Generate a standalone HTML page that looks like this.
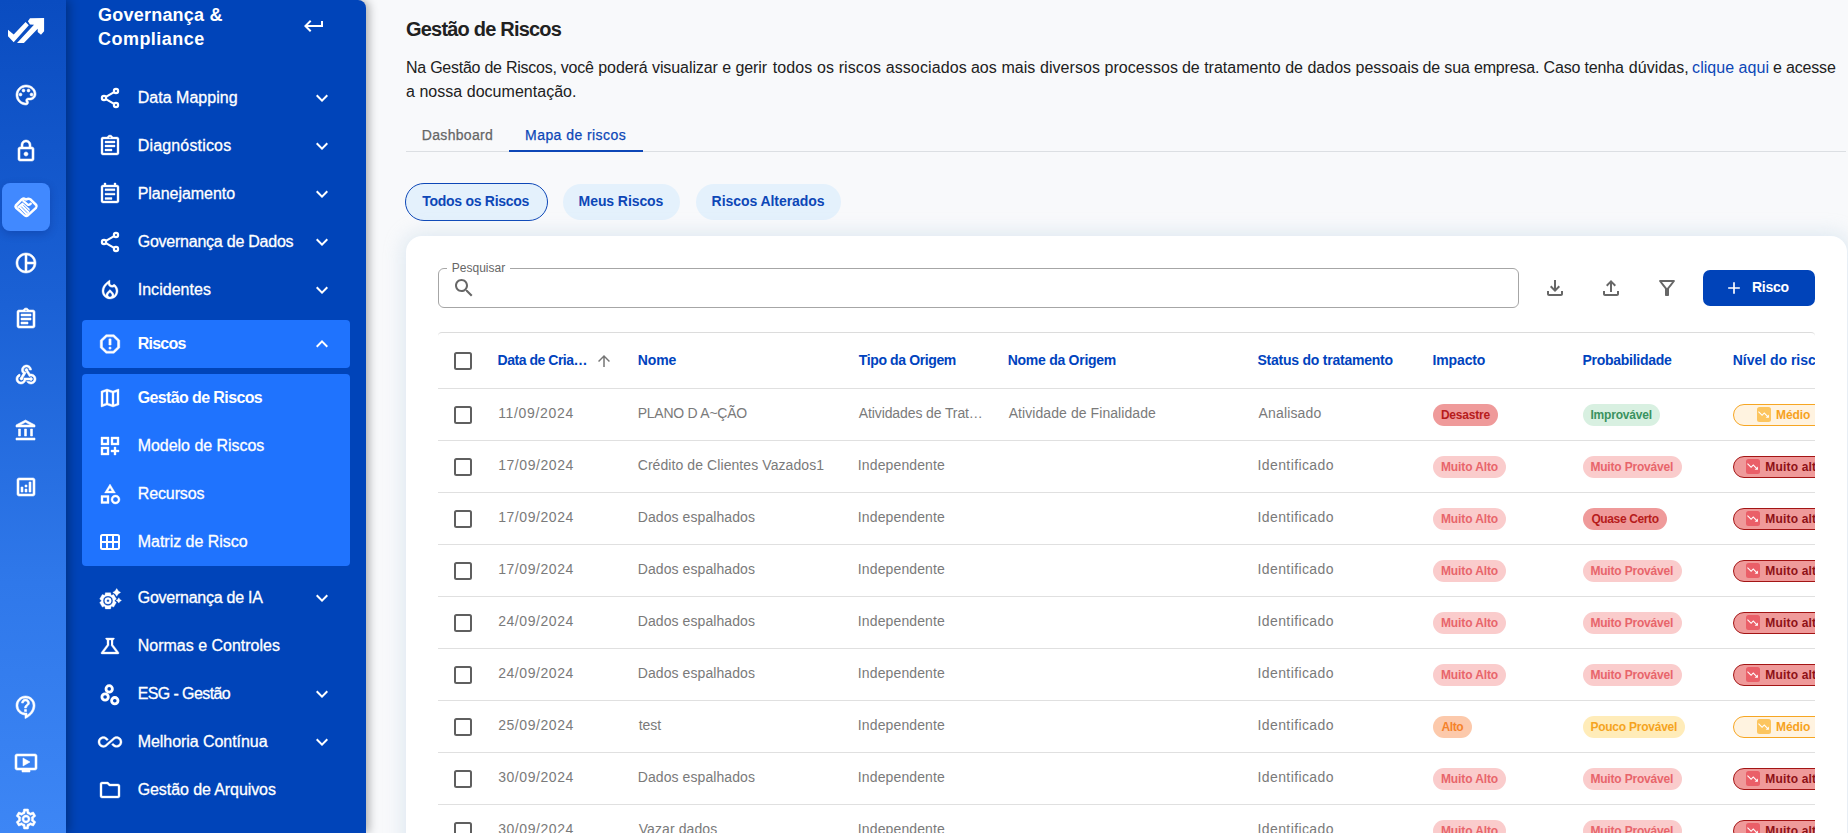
<!DOCTYPE html>
<html lang="pt-BR">
<head>
<meta charset="utf-8">
<title>Gestão de Riscos</title>
<style>
*{box-sizing:border-box;margin:0;padding:0}
html,body{width:1848px;height:833px;overflow:hidden}
body{font-family:"Liberation Sans",sans-serif;background:#f8f9fb;color:#212121;position:relative}
svg{display:block}
.abs{position:absolute}
.t{position:absolute;white-space:nowrap;display:block}
#rail{position:absolute;left:0;top:0;width:66px;height:833px;background:linear-gradient(180deg,#0a4cc0 0%,#1a60d4 35%,#2f78ea 70%,#3d86f5 100%);z-index:3;box-shadow:3px 0 10px rgba(0,0,0,.30)}
#rail .ic{position:absolute;left:14px;width:24px;height:24px;fill:#fff;stroke:#fff;stroke-width:.55px;overflow:visible}
#rail .active{position:absolute;left:2px;top:183px;width:48px;height:48px;border-radius:8px;background:#4189ff;box-shadow:0 3px 8px rgba(0,20,90,.22)}
#side{position:absolute;left:66px;top:0;width:300px;height:833px;background:#0044b9;z-index:2;box-shadow:3px 0 10px rgba(0,0,0,.30);border-top-right-radius:8px;color:#fff}
#side .h2{font-size:18px;line-height:24px;font-weight:700}
#side .it{position:absolute;left:16px;width:268px;height:48px;font-size:16px}
#side .it .t{top:15px;line-height:20px;-webkit-text-stroke:.3px #fff}
#side .it.b .t{font-weight:700;-webkit-text-stroke:0}
#side .it svg.i{position:absolute;left:16px;top:13px;width:24px;height:24px;fill:#fff;stroke:#fff;stroke-width:.35px;overflow:visible}
#side .it svg.c{position:absolute;left:228px;top:13px;width:24px;height:24px;fill:#fff}
#side .hl{position:absolute;left:16px;width:268px;background:#1f73fe;border-radius:4px}
#main{position:absolute;left:0;top:0;width:1848px;height:833px}
.h1{top:17px;font-size:20px;line-height:24px;font-weight:700;color:#212121}
.desc{font-size:16px;line-height:24px;color:#212121}
.desc a{color:#0d47b7;text-decoration:none}
.tab{top:126px;font-size:14px;line-height:18px;color:#666;-webkit-text-stroke:.25px #666}
.tab.on{color:#0d47b7;-webkit-text-stroke:.25px #0d47b7}
.chip{position:absolute;border-radius:19px;background:#e4f1fc}
.chip .t{font-size:14px;font-weight:700;line-height:18px;color:#0d47b7;top:8px}
#card{position:absolute;left:406px;top:236px;width:1441px;height:640px;background:#fff;border-radius:16px 16px 0 0;box-shadow:0 0 18px 4px rgba(184,208,228,.36)}
.gi{position:absolute;width:24px;height:24px;fill:#676767}
.th{font-size:14px;line-height:20px;font-weight:700;color:#0043be;top:350px}
.td{font-size:14px;line-height:20px;color:#7a7a7a}
.cb{position:absolute;left:454px;width:18px;height:18px;border:2px solid #5f5f5f;border-radius:2.500px}
.rl{position:absolute;left:438px;width:1377px;height:1px;background:#e0e0e0}
.bd{position:absolute;height:22px;border-radius:11px}
.bd .t{font-size:12px;line-height:14px;font-weight:700;top:4px}
.lv{position:absolute;left:1733px;height:22px;width:110px;border-radius:11px;border:1px solid}
.lv .sq{position:absolute;top:2.200px;width:14.500px;height:14.500px;border-radius:2.500px}
.lv .t{font-size:12px;line-height:14px;font-weight:700;top:3px}
</style>
</head>
<body>
<div id="rail">
  <svg class="abs" style="left:0;top:0" width="56" height="56" viewBox="0 0 56 56"><g fill="#fff"><path d="M8 29.800 L13.700 34.400 L25.600 22.100 L28.800 25.300 L13.700 42.300 L8 36.200 Z"/><path d="M30 18.300 L44.100 18.100 L44.100 31.300 L41 34.800 L37.700 31.900 L37.700 28.700 L23.900 42.900 L17 42.900 L34 24.800 L30 24.500 L27.900 21.200 Z"/></g></svg>
  <svg class="ic" style="top:83px" viewBox="0 0 24 24"><path d="M12 22C6.49 22 2 17.51 2 12S6.49 2 12 2s10 4.04 10 9c0 3.31-2.69 6-6 6h-1.77c-.28 0-.5.22-.5.5 0 .12.05.23.13.33.41.47.64 1.06.64 1.67 0 1.38-1.12 2.5-2.5 2.5zm0-18c-4.41 0-8 3.59-8 8s3.59 8 8 8c.28 0 .5-.22.5-.5 0-.16-.08-.28-.14-.35-.41-.46-.63-1.05-.63-1.65 0-1.38 1.12-2.5 2.5-2.5H16c2.21 0 4-1.79 4-4 0-3.86-3.59-7-8-7z"/><circle cx="6.5" cy="11.5" r="1.5"/><circle cx="9.5" cy="7.5" r="1.5"/><circle cx="14.5" cy="7.5" r="1.5"/><circle cx="17.5" cy="11.5" r="1.5"/></svg>
  <svg class="ic" style="top:139px" viewBox="0 0 24 24"><path d="M18 8h-1V6c0-2.76-2.24-5-5-5S7 3.240 7 6v2H6c-1.100 0-2 .9-2 2v10c0 1.100.9 2 2 2h12c1.100 0 2-.9 2-2V10c0-1.100-.9-2-2-2zM9 6c0-1.660 1.340-3 3-3s3 1.340 3 3v2H9V6zm9 14H6V10h12v10zm-6-3c1.100 0 2-.9 2-2s-.9-2-2-2-2 .9-2 2 .9 2 2 2z"/></svg>
  <div class="active"></div>
  <svg class="ic" style="top:195px;stroke:none" viewBox="0 0 24 24"><path d="M1.800 10.500 L8 4.200 Q9.600 3 11.200 4 L12.200 4.600 Q14.200 3 16.200 4.200 L22.200 10 Q23.200 11.500 22 12.800 L13.800 20.400 Q12.200 21.400 10.800 20.200 L2 12.800 Q1 11.600 1.800 10.500 Z" fill="none" stroke="#fff" stroke-width="2.500" stroke-linejoin="round"/><path d="M9.300 5.800 L13.600 9.500 Q15 10.400 16.300 9.200 L16.800 8.600" fill="none" stroke="#fff" stroke-width="2.300" stroke-linecap="round" stroke-linejoin="round"/><path d="M3 11.800 L8.500 7.500 L15.800 14 L15 17.500 L12.300 20.200 Z" fill="#fff"/><g stroke="#4189ff" stroke-width=".8" fill="none"><path d="M7.200 11.600 L13.200 17.800 M9.400 10.200 L15.200 16 M5.200 13.200 L11.200 19.500"/></g></svg>
  <svg class="ic" style="top:251px" viewBox="0 0 24 24"><path d="M12 2C6.480 2 2 6.480 2 12s4.480 10 10 10 10-4.480 10-10S17.520 2 12 2zm1 2.070c3.610.45 6.480 3.330 6.930 6.930H13V4.070zM4 12c0-4.060 3.070-7.440 7-7.930v15.870c-3.930-.5-7-3.880-7-7.940zm9 7.930V13h6.930c-.45 3.610-3.320 6.480-6.930 6.930z"/></svg>
  <svg class="ic" style="top:307px" viewBox="0 0 24 24"><path d="M7 15h7v2H7zm0-4h10v2H7zm0-4h10v2H7zm12-4h-4.180C14.400 1.840 13.300 1 12 1c-1.300 0-2.400.84-2.820 2H5c-.14 0-.27.01-.4.04-.39.08-.74.28-1.010.55-.18.18-.33.4-.43.64-.1.230-.16.490-.16.770v14c0 .27.06.54.16.78s.25.45.43.64c.27.27.62.47 1.010.55.130.02.260.03.400.03h14c1.100 0 2-.9 2-2V5c0-1.100-.9-2-2-2zm-7-.25c.41 0 .75.34.75.75s-.34.75-.75.75-.75-.34-.75-.75.34-.75.75-.75zM19 19H5V5h14v14z"/></svg>
  <svg class="ic" style="top:363px" viewBox="0 0 24 24"><path d="M10 15h5.880c.27-.31.67-.5 1.120-.5.830 0 1.500.67 1.500 1.500S17.830 17.500 17 17.500c-.44 0-.84-.19-1.120-.5H11.900c-.46 2.280-2.480 4-4.900 4-2.760 0-5-2.240-5-5 0-2.420 1.720-4.440 4-4.900v2.070C4.840 13.580 4 14.700 4 16c0 1.650 1.350 3 3 3s3-1.350 3-3V15zM12.500 4c1.650 0 3 1.350 3 3h2c0-2.760-2.240-5-5-5s-5 2.240-5 5c0 1.430.6 2.710 1.550 3.620l-2.350 3.900C6.300 14.540 6 14.980 6 15.500 6 16.330 6.670 17 7.500 17S9 16.330 9 15.500c0-.16-.02-.31-.07-.45l3.380-5.630C10.990 9.330 9.500 8.350 9.500 7c0-1.650 1.350-3 3-3zM17 13c-.64 0-1.230.2-1.720.54l-3.050-5.070C11.530 8.350 11 7.740 11 7c0-.83.67-1.500 1.500-1.500S14 6.170 14 7c0 .15-.02.29-.06.43l2.190 3.650C16.410 11.030 16.700 11 17 11c2.760 0 5 2.240 5 5s-2.240 5-5 5c-1.850 0-3.470-1.010-4.330-2.500h2.670c.48.32 1.050.5 1.660.5 1.650 0 3-1.350 3-3s-1.350-3-3-3z"/></svg>
  <svg class="ic" style="top:419px" viewBox="0 0 24 24"><path d="M6.500 10h-2v7h2v-7zm6 0h-2v7h2v-7zm8.500 9H2v2h19v-2zm-2.500-9h-2v7h2v-7zm-7-6.740L16.710 6H6.290l5.210-2.740m0-2.260L2 6v2h19V6l-9.500-5z"/></svg>
  <svg class="ic" style="top:475px" viewBox="0 0 24 24"><path d="M19 3H5c-1.100 0-2 .9-2 2v14c0 1.100.9 2 2 2h14c1.100 0 2-.9 2-2V5c0-1.100-.9-2-2-2zm0 16H5V5h14v14zM7 12h2v5H7zm8-5h2v10h-2zm-4 7h2v3h-2zm0-4h2v2h-2z"/></svg>
  <svg class="ic" style="top:695px" viewBox="0 0 24 24"><path d="M11 23.590v-3.600c-5.010-.26-9-4.420-9-9.490C2 5.260 6.260 1 11.500 1S21 5.260 21 10.500c0 4.950-3.440 9.930-8.570 12.400l-1.430.69zM11.500 3C7.360 3 4 6.360 4 10.500S7.360 18 11.500 18H13v2.300c3.640-2.300 6-6.080 6-9.800C19 6.360 15.640 3 11.500 3zm-1 11.500h2v2h-2zm2-1.500h-2c0-3.250 3-3 3-5 0-1.100-.9-2-2-2s-2 .9-2 2h-2c0-2.210 1.790-4 4-4s4 1.790 4 4c0 2.500-3 2.750-3 5z"/></svg>
  <svg class="ic" style="top:751px" viewBox="0 0 24 24"><path d="M21 3H3c-1.110 0-2 .89-2 2v12c0 1.100.89 2 2 2h5v2h8v-2h5c1.100 0 1.990-.9 1.990-2L23 5c0-1.110-.9-2-2-2zm0 14H3V5h18v12zm-5-6l-7 4V7z"/></svg>
  <svg class="ic" style="top:807px" viewBox="0 0 24 24"><path d="M19.430 12.980c.04-.32.07-.64.07-.98 0-.34-.03-.66-.07-.98l2.110-1.650c.19-.15.24-.42.12-.64l-2-3.460c-.09-.16-.26-.25-.44-.25-.06 0-.12.010-.17.030l-2.490 1c-.52-.4-1.080-.73-1.690-.98l-.38-2.650C14.460 2.180 14.250 2 14 2h-4c-.25 0-.46.18-.49.42l-.38 2.650c-.61.25-1.170.59-1.690.98l-2.490-1c-.06-.02-.12-.03-.18-.03-.17 0-.34.09-.43.25l-2 3.460c-.13.22-.07.49.12.64l2.110 1.650c-.04.32-.07.65-.07.980 0 .33.03.66.07.98l-2.110 1.650c-.19.15-.24.42-.12.640l2 3.460c.09.160.26.250.44.250.06 0 .12-.010.17-.030l2.490-1c.52.4 1.080.73 1.690.98l.38 2.650c.03.24.24.42.49.42h4c.25 0 .46-.18.49-.42l.38-2.650c.61-.25 1.170-.59 1.690-.98l2.490 1c.06.02.12.03.18.03.17 0 .34-.09.43-.25l2-3.460c.12-.22.07-.49-.12-.64l-2.110-1.650zm-1.980-1.710c.04.31.05.52.05.73 0 .21-.02.43-.05.73l-.14 1.130.89.7 1.080.84-.7 1.210-1.270-.51-1.040-.42-.9.68c-.43.32-.84.56-1.250.73l-1.060.43-.16 1.130-.2 1.350h-1.400l-.19-1.350-.16-1.130-1.060-.43c-.43-.18-.83-.41-1.230-.71l-.91-.7-1.060.43-1.270.51-.7-1.210 1.080-.84.89-.7-.14-1.130c-.03-.31-.05-.54-.05-.74s.02-.43.05-.73l.14-1.130-.89-.7-1.080-.84.7-1.210 1.270.51 1.040.42.9-.68c.43-.32.84-.56 1.250-.73l1.060-.43.16-1.130.2-1.350h1.390l.19 1.350.16 1.130 1.060.43c.43.18.83.41 1.230.71l.91.7 1.060-.43 1.270-.51.7 1.210-1.070.85-.89.7.14 1.130zM12 8c-2.210 0-4 1.790-4 4s1.790 4 4 4 4-1.790 4-4-1.790-4-4-4zm0 6c-1.100 0-2-.9-2-2s.9-2 2-2 2 .9 2 2-.9 2-2 2z"/></svg>
</div>

<div id="side">
<span class="t h2" style="left:32.00px;letter-spacing:0.227px;top:3px">Governança &amp;</span>
<span class="t h2" style="left:32.00px;letter-spacing:0.467px;top:27px">Compliance</span>
<svg class="abs" style="left:236px;top:13.700px;fill:#fff" width="24" height="24" viewBox="0 0 24 24"><path d="M19 7v4H5.830l3.580-3.590L8 6l-6 6 6 6 1.410-1.410L5.830 13H21V7z"/></svg>
<div class="hl" style="top:320px;height:48px"></div>
<div class="hl" style="top:374px;height:192px"></div>
<div class="it" style="top:73px"><svg class="i" viewBox="0 0 24 24"><g fill="none" stroke="#fff" stroke-width="2.200"><circle cx="18" cy="5" r="2.100"/><circle cx="6" cy="12" r="2.100"/><circle cx="18" cy="19" r="2.100"/><path d="M7.900 10.900 L16.100 6.100 M7.900 13.100 L16.100 17.900"/></g></svg><span class="t " style="left:55.70px;letter-spacing:0.027px;">Data Mapping</span><svg class="c" viewBox="0 0 24 24"><path d="M16.590 8.590L12 13.170 7.410 8.590 6 10l6 6 6-6z"/></svg></div>
<div class="it" style="top:121px"><svg class="i" viewBox="0 0 24 24"><path d="M7 15h7v2H7zm0-4h10v2H7zm0-4h10v2H7zm12-4h-4.180C14.400 1.840 13.300 1 12 1c-1.300 0-2.400.84-2.820 2H5c-.14 0-.27.01-.4.04-.39.08-.74.28-1.010.55-.18.18-.33.4-.43.64-.1.230-.16.490-.16.770v14c0 .27.06.54.16.78s.25.45.43.64c.27.27.62.47 1.010.55.130.02.260.03.400.03h14c1.100 0 2-.9 2-2V5c0-1.100-.9-2-2-2zm-7-.25c.41 0 .75.34.75.75s-.34.75-.75.75-.75-.34-.75-.75.34-.75.75-.75zM19 19H5V5h14v14z"/></svg><span class="t " style="left:55.70px;letter-spacing:0.173px;">Diagnósticos</span><svg class="c" viewBox="0 0 24 24"><path d="M16.590 8.590L12 13.170 7.410 8.590 6 10l6 6 6-6z"/></svg></div>
<div class="it" style="top:169px"><svg class="i" viewBox="0 0 24 24"><path transform="translate(0,-1)" d="M19 4h-1V2h-2v2H8V2H6v2H5c-1.110 0-2 .9-2 2v14c0 1.100.89 2 2 2h14c1.100 0 2-.9 2-2V6c0-1.100-.9-2-2-2zm0 16H5V6h14v14zM7 7.800h10v1.900H7zm0 4.400h10v1.900H7zm0 4.400h7v1.800H7z"/></svg><span class="t " style="left:55.70px;letter-spacing:-0.036px;">Planejamento</span><svg class="c" viewBox="0 0 24 24"><path d="M16.590 8.590L12 13.170 7.410 8.590 6 10l6 6 6-6z"/></svg></div>
<div class="it" style="top:217px"><svg class="i" viewBox="0 0 24 24"><g fill="none" stroke="#fff" stroke-width="2.200"><circle cx="18" cy="5" r="2.100"/><circle cx="6" cy="12" r="2.100"/><circle cx="18" cy="19" r="2.100"/><path d="M7.900 10.900 L16.100 6.100 M7.900 13.100 L16.100 17.900"/></g></svg><span class="t " style="left:55.70px;letter-spacing:-0.233px;">Governança de Dados</span><svg class="c" viewBox="0 0 24 24"><path d="M16.590 8.590L12 13.170 7.410 8.590 6 10l6 6 6-6z"/></svg></div>
<div class="it" style="top:265px"><svg class="i" viewBox="0 0 24 24"><path d="M16 6l-.44.55C14.380 8.020 12 7.190 12 5.300V2S4 6 4 13c0 2.920 1.560 5.470 3.890 6.860.56.33 1.170.6 1.810.8.720.22 1.490.34 2.300.34 4.420 0 8-3.580 8-8 0-2.960-1.610-5.620-4-7zM12 19c-1.100 0-2-.87-2-1.940 0-.51.2-.99.58-1.360L12 14.300l1.430 1.400c.37.37.57.85.57 1.360 0 1.070-.9 1.940-2 1.940zm3.960-1.220c.04-.36.22-1.890-1.130-3.220L12 11.500l-2.830 2.780C7.810 15.620 8 17.160 8.040 17.500 6.790 16.400 6 14.790 6 13c0-3.160 2.130-5.650 4.030-7.250.23 1.990 1.930 3.550 3.990 3.550.78 0 1.540-.23 2.180-.64C17.330 9.800 18 11.360 18 13c0 1.790-.79 3.400-2.040 4.780z"/></svg><span class="t " style="left:55.70px;letter-spacing:0.033px;">Incidentes</span><svg class="c" viewBox="0 0 24 24"><path d="M16.590 8.590L12 13.170 7.410 8.590 6 10l6 6 6-6z"/></svg></div>
<div class="it b" style="top:319px"><svg class="i" viewBox="0 0 24 24"><g transform="translate(12 12) scale(1.080 1.020) translate(-12 -12)" stroke="#fff" stroke-width=".500"><path d="M15.730 3H8.270L3 8.270v7.460L8.270 21h7.460L21 15.730V8.270L15.730 3zM19 14.900L14.900 19H9.100L5 14.900V9.100L9.100 5h5.800L19 9.100v5.800z"/><path d="M11 7h2v6h-2z"/><circle cx="12" cy="16" r="1.100"/></g></svg><span class="t " style="left:55.70px;letter-spacing:-0.760px;">Riscos</span><svg class="c" viewBox="0 0 24 24"><path d="M12 8l-6 6 1.410 1.410L12 10.830l4.590 4.580L18 14z"/></svg></div>
<div class="it b" style="top:373px"><svg class="i" viewBox="0 0 24 24"><path d="M20.500 3l-.16.03L15 5.100 9 3 3.360 4.900c-.21.07-.36.25-.36.480V20.500c0 .28.22.5.5.5l.16-.03L9 18.900l6 2.100 5.640-1.900c.21-.07.36-.25.36-.480V3.500c0-.28-.22-.5-.5-.5zM10 5.470l4 1.400v11.660l-4-1.400V5.470zm-5 .99l3-1.010v11.700l-3 1.160V6.460zm14 11.080l-3 1.010V6.860l3-1.160v11.840z"/></svg><span class="t " style="left:55.70px;letter-spacing:-0.613px;">Gestão de Riscos</span></div>
<div class="it" style="top:421px"><svg class="i" viewBox="0 0 24 24"><path d="M3 11h8V3H3v8zm2-6h4v4H5V5zm8-2v8h8V3h-8zm6 6h-4V5h4v4zM3 21h8v-8H3v8zm2-6h4v4H5v-4zm13-2h-2v3h-3v2h3v3h2v-3h3v-2h-3z"/></svg><span class="t " style="left:55.70px;letter-spacing:-0.033px;">Modelo de Riscos</span></div>
<div class="it" style="top:469px"><svg class="i" viewBox="0 0 24 24"><path d="M12 2l-5.500 9h11L12 2zm0 3.840L13.930 9h-3.870L12 5.840zM17.500 13c-2.490 0-4.500 2.010-4.500 4.500s2.010 4.500 4.500 4.500 4.500-2.010 4.500-4.500-2.010-4.500-4.500-4.500zm0 7c-1.380 0-2.500-1.120-2.500-2.500s1.120-2.500 2.500-2.500 2.500 1.120 2.500 2.500-1.120 2.500-2.500 2.500zM3 21.500h8v-8H3v8zm2-6h4v4H5v-4z"/></svg><span class="t " style="left:55.70px;letter-spacing:-0.100px;">Recursos</span></div>
<div class="it" style="top:517px"><svg class="i" viewBox="0 0 24 24"><g fill="none" stroke="#fff" stroke-width="2"><rect x="3" y="5" width="18" height="14" rx="1.500"/><path d="M9 5 V19 M15 5 V19 M3 12 H21"/></g></svg><span class="t " style="left:55.70px;letter-spacing:-0.014px;">Matriz de Risco</span></div>
<div class="it" style="top:573px"><svg class="i" viewBox="0 0 24 24"><path fill-rule="evenodd" d="M6.94 8.95 L7.37 6.72 L12.63 6.72 L13.06 8.95 L13.54 9.23 L15.69 8.48 L18.31 13.03 L16.59 14.52 L16.59 15.08 L18.31 16.57 L15.69 21.12 L13.54 20.37 L13.06 20.65 L12.63 22.88 L7.37 22.88 L6.94 20.65 L6.46 20.37 L4.31 21.12 L1.69 16.57 L3.41 15.08 L3.41 14.52 L1.69 13.03 L4.31 8.48 L6.46 9.23 Z M5.10 14.80 a4.90 4.90 0 1 1 9.80 0 a4.90 4.90 0 1 1 -9.80 0 Z M6.70 14.80 a3.30 3.30 0 1 1 6.60 0 a3.30 3.30 0 1 1 -6.60 0 Z M8.70 14.80 a1.30 1.30 0 1 1 2.60 0 a1.30 1.30 0 1 1 -2.60 0 Z"/><path d="M18.70 2.50 Q19.79 5.31 22.60 6.40 Q19.79 7.49 18.70 10.30 Q17.61 7.49 14.80 6.40 Q17.61 5.31 18.70 2.50 Z"/><path d="M20.80 11.70 Q21.56 13.64 23.50 14.40 Q21.56 15.16 20.80 17.10 Q20.04 15.16 18.10 14.40 Q20.04 13.64 20.80 11.70 Z"/></svg><span class="t " style="left:55.70px;letter-spacing:-0.247px;">Governança de IA</span><svg class="c" viewBox="0 0 24 24"><path d="M16.590 8.590L12 13.170 7.410 8.590 6 10l6 6 6-6z"/></svg></div>
<div class="it" style="top:621px"><svg class="i" viewBox="0 0 24 24"><path d="M13 11.330L18 18H6l5-6.670V6h2m2.960-2H8.040c-.42 0-.65.48-.39.81L9 6.500v4.170L3.200 18.400c-.49.66-.02 1.600.8 1.600h16c.82 0 1.290-.94.8-1.600L15 10.670V6.500l1.350-1.690c.26-.33.03-.81-.39-.81z"/></svg><span class="t " style="left:55.70px;letter-spacing:-0.000px;">Normas e Controles</span></div>
<div class="it" style="top:669px"><svg class="i" viewBox="0 0 24 24"><g fill="none" stroke="#fff" stroke-width="2.800"><circle cx="11.200" cy="6.900" r="3.200"/><circle cx="7.100" cy="15" r="3.200"/><circle cx="16.800" cy="18.700" r="3.200"/></g></svg><span class="t " style="left:55.70px;letter-spacing:-0.600px;">ESG - Gestão</span><svg class="c" viewBox="0 0 24 24"><path d="M16.590 8.590L12 13.170 7.410 8.590 6 10l6 6 6-6z"/></svg></div>
<div class="it" style="top:717px"><svg class="i" viewBox="0 0 24 24"><path d="M18.600 6.620c-1.440 0-2.800.56-3.770 1.530L12 10.660 10.480 12h.01L7.800 14.390c-.64.64-1.490.99-2.400.99-1.870 0-3.390-1.510-3.390-3.380S3.530 8.620 5.400 8.620c.91 0 1.760.35 2.440 1.030l1.130 1 1.510-1.340L9.220 8.200C8.200 7.180 6.840 6.620 5.400 6.620 2.420 6.620 0 9.040 0 12s2.420 5.380 5.400 5.380c1.440 0 2.800-.56 3.770-1.530l2.830-2.500.01.010L13.520 12h-.01l2.690-2.390c.64-.64 1.490-.99 2.400-.99 1.870 0 3.390 1.510 3.390 3.380s-1.520 3.380-3.390 3.380c-.9 0-1.760-.35-2.440-1.030l-1.140-1.010-1.510 1.340 1.270 1.120c1.020 1.010 2.370 1.570 3.820 1.570 2.980 0 5.400-2.410 5.400-5.380s-2.420-5.370-5.400-5.370z"/></svg><span class="t " style="left:55.70px;letter-spacing:-0.056px;">Melhoria Contínua</span><svg class="c" viewBox="0 0 24 24"><path d="M16.590 8.590L12 13.170 7.410 8.590 6 10l6 6 6-6z"/></svg></div>
<div class="it" style="top:765px"><svg class="i" viewBox="0 0 24 24"><path d="M9.170 6l2 2H20v10H4V6h5.170M10 4H4c-1.100 0-1.990.9-1.990 2L2 18c0 1.100.9 2 2 2h16c1.100 0 2-.9 2-2V8c0-1.100-.9-2-2-2h-8l-2-2z"/></svg><span class="t " style="left:55.70px;letter-spacing:-0.082px;">Gestão de Arquivos</span></div>
</div>
<div id="main">
<span class="t h1" style="left:406.00px;letter-spacing:-0.800px;">Gestão de Riscos</span>
<span class="t desc" style="left:406.00px;letter-spacing:-0.250px;top:56px">Na Gestão de Riscos, você</span>
<span class="t desc" style="left:598.30px;letter-spacing:-0.083px;top:56px">poderá visualizar e gerir</span>
<span class="t desc" style="left:772.70px;letter-spacing:0.112px;top:56px">todos os riscos associados</span>
<span class="t desc" style="left:970.90px;letter-spacing:0.062px;top:56px">aos mais diversos processos</span>
<span class="t desc" style="left:1181.90px;letter-spacing:0.007px;top:56px">de tratamento de dados pessoais</span>
<span class="t desc" style="left:1422.60px;letter-spacing:-0.168px;top:56px">de sua empresa. Caso tenha</span>
<span class="t desc" style="left:1628.80px;letter-spacing:0.057px;top:56px">dúvidas,</span>
<span class="t desc" style="left:1692.10px;letter-spacing:0.040px;top:56px"><a>clique aqui</a></span>
<span class="t desc" style="left:1773.00px;letter-spacing:-0.171px;top:56px">e acesse</span>
<span class="t desc" style="left:406.00px;letter-spacing:0.030px;top:80px">a nossa documentação.</span>
<span class="t tab" style="left:421.80px;letter-spacing:0.313px;">Dashboard</span>
<span class="t tab on" style="left:525.10px;letter-spacing:0.431px;">Mapa de riscos</span>
<div class="abs" style="left:406px;top:151px;width:1440px;height:1px;background:#dcdfe3"></div>
<div class="abs" style="left:509px;top:150px;width:134px;height:2px;background:#0d47b7"></div>
<div class="chip" style="left:405px;top:183px;width:143px;height:38px;border:1.500px solid #0d47b7"><span class="t " style="left:16.30px;letter-spacing:-0.279px;top:7.500px">Todos os Riscos</span></div>
<div class="chip" style="left:563px;top:184px;width:117px;height:36px"><span class="t " style="left:15.60px;letter-spacing:-0.080px;">Meus Riscos</span></div>
<div class="chip" style="left:696px;top:184px;width:145px;height:36px"><span class="t " style="left:15.60px;letter-spacing:-0.060px;">Riscos Alterados</span></div>
<div id="card"></div>
<div class="abs" style="left:438px;top:268px;width:1081px;height:40px;border:1px solid #a6a6a6;border-radius:6px"></div>
<div class="abs" style="left:447px;top:266px;width:63px;height:5px;background:#fff"></div>
<span class="t " style="left:451.70px;letter-spacing:0.025px;top:260px;font-size:12px;line-height:16px;color:#666">Pesquisar</span>
<svg class="gi" style="left:452px;top:276px" viewBox="0 0 24 24"><path d="M15.500 14h-.79l-.28-.27C15.410 12.590 16 11.110 16 9.500 16 5.910 13.090 3 9.500 3S3 5.910 3 9.500 5.910 16 9.500 16c1.610 0 3.090-.59 4.230-1.570l.27.28v.79l5 4.990L20.490 19l-4.990-5zm-6 0C7.010 14 5 11.990 5 9.500S7.010 5 9.500 5 14 7.010 14 9.500 11.990 14 9.500 14z"/></svg>
<svg class="gi" style="left:1543px;top:276px" viewBox="0 0 24 24"><path d="M18 15v3H6v-3H4v3c0 1.100.9 2 2 2h12c1.100 0 2-.9 2-2v-3h-2zm-1-4l-1.410-1.410L13 12.170V4h-2v8.170L8.410 9.590 7 11l5 5 5-5z"/></svg>
<svg class="gi" style="left:1599px;top:276px" viewBox="0 0 24 24"><path d="M18 15v3H6v-3H4v3c0 1.100.9 2 2 2h12c1.100 0 2-.9 2-2v-3h-2zM7 9l1.410 1.410L11 7.830V16h2V7.830l2.590 2.580L17 9l-5-5-5 5z"/></svg>
<svg class="gi" style="left:1655px;top:276px" viewBox="0 0 24 24"><path d="M7 6h10l-5.010 6.300L7 6zm-2.750-.39C6.270 8.200 10 13 10 13v6c0 .55.45 1 1 1h2c.55 0 1-.45 1-1v-6s3.720-4.800 5.740-7.390c.51-.66.04-1.610-.79-1.610H5.040c-.83 0-1.300.95-.79 1.610z"/></svg>
<div class="abs" style="left:1703px;top:270px;width:112px;height:36px;border-radius:7px;background:#0043b9"></div>
<svg class="abs" style="left:1724px;top:278px;fill:#fff" width="20" height="20" viewBox="0 0 24 24"><path d="M19 13h-6v6h-2v-6H5v-2h6V5h2v6h6v2z"/></svg>
<span class="t " style="left:1752.00px;letter-spacing:-0.250px;top:276.500px;font-size:14px;line-height:20px;font-weight:700;color:#fff">Risco</span>
<div class="abs" style="left:438px;top:332px;width:1377px;height:520px;border-top:1px solid #dcdcdc;border-radius:4px 4px 0 0"></div>
<div class="cb" style="top:352px"></div>
<span class="t th" style="left:497.60px;letter-spacing:-0.475px;">Data de Cria…</span>
<span class="t th" style="left:637.70px;letter-spacing:-0.100px;">Nome</span>
<span class="t th" style="left:858.80px;letter-spacing:-0.377px;">Tipo da Origem</span>
<span class="t th" style="left:1007.70px;letter-spacing:-0.262px;">Nome da Origem</span>
<span class="t th" style="left:1257.50px;letter-spacing:-0.232px;">Status do tratamento</span>
<span class="t th" style="left:1432.50px;letter-spacing:-0.133px;">Impacto</span>
<span class="t th" style="left:1582.40px;letter-spacing:-0.267px;">Probabilidade</span>
<div class="abs" style="left:1733px;top:350px;width:82px;height:20px;overflow:hidden"><span class="t th" style="left:-0.30px;letter-spacing:-0.015px;top:0">Nível do risco</span></div>
<svg class="abs" style="left:595px;top:352px;fill:#757575" width="18" height="18" viewBox="0 0 24 24"><path d="M4 12l1.410 1.410L11 7.830V20h2V7.830l5.580 5.590L20 12l-8-8-8 8z"/></svg>
<div class="rl" style="top:388px"></div>
<div class="cb" style="top:406px"></div>
<span class="t td" style="left:498.20px;letter-spacing:0.667px;top:403px">11/09/2024</span>
<span class="t td" style="left:637.70px;letter-spacing:-0.242px;top:403px">PLANO D A~ÇÃO</span>
<span class="t td" style="left:858.80px;letter-spacing:-0.111px;top:403px">Atividades de Trat…</span>
<span class="t td" style="left:1008.70px;letter-spacing:0.073px;top:403px">Atividade de Finalidade</span>
<span class="t td" style="left:1258.50px;letter-spacing:0.162px;top:403px">Analisado</span>
<div class="bd" style="left:1433px;top:404px;width:65.0px;background:#ef9a9a"><span class="t " style="left:7.90px;letter-spacing:-0.200px;color:#b71c1c">Desastre</span></div>
<div class="bd" style="left:1583px;top:404px;width:77.0px;background:#d8f0e1"><span class="t " style="left:7.40px;letter-spacing:-0.189px;color:#3a9260">Improvável</span></div>
<div class="abs" style="left:1733px;top:404px;width:82px;height:22px;overflow:hidden"><div class="lv" style="left:0;border-color:#f6a623;background:#fff3e0"><div class="sq" style="left:22.700px;background:#fcc55f"><svg class="abs" style="left:.800px;top:.800px" width="13" height="13" viewBox="0 0 24 24"><path d="M16 18l2.290-2.290-4.880-4.880-4 4L2 7.410 3.410 6l6 6 4-4 6.300 6.290L22 12v6z" fill="#fff"/></svg></div><span class="t " style="left:42.00px;letter-spacing:-0.075px;color:#f6a21e">Médio</span></div></div>
<div class="rl" style="top:440px"></div>
<div class="cb" style="top:458px"></div>
<span class="t td" style="left:498.20px;letter-spacing:0.556px;top:455px">17/09/2024</span>
<span class="t td" style="left:637.70px;letter-spacing:0.081px;top:455px">Crédito de Clientes Vazados1</span>
<span class="t td" style="left:857.80px;letter-spacing:0.127px;top:455px">Independente</span>
<span class="t td" style="left:1257.50px;letter-spacing:0.400px;top:455px">Identificado</span>
<div class="bd" style="left:1433px;top:456px;width:72.9px;background:#facccc"><span class="t " style="left:7.90px;letter-spacing:-0.100px;color:#e8656b">Muito Alto</span></div>
<div class="bd" style="left:1583px;top:456px;width:98.8px;background:#facccc"><span class="t " style="left:7.40px;letter-spacing:-0.177px;color:#e8656b">Muito Provável</span></div>
<div class="abs" style="left:1733px;top:456px;width:82px;height:22px;overflow:hidden"><div class="lv" style="left:0;border-color:#a31515;background:#ef9a9a"><div class="sq" style="left:11.700px;background:#ea5f68"><svg class="abs" style="left:.800px;top:.800px" width="13" height="13" viewBox="0 0 24 24"><path d="M16 18l2.290-2.290-4.880-4.880-4 4L2 7.410 3.410 6l6 6 4-4 6.300 6.290L22 12v6z" fill="#fff"/></svg></div><span class="t " style="left:31.20px;letter-spacing:0.200px;color:#8e1116">Muito alto</span></div></div>
<div class="rl" style="top:492px"></div>
<div class="cb" style="top:510px"></div>
<span class="t td" style="left:498.20px;letter-spacing:0.556px;top:507px">17/09/2024</span>
<span class="t td" style="left:637.70px;letter-spacing:0.087px;top:507px">Dados espalhados</span>
<span class="t td" style="left:857.80px;letter-spacing:0.127px;top:507px">Independente</span>
<span class="t td" style="left:1257.50px;letter-spacing:0.400px;top:507px">Identificado</span>
<div class="bd" style="left:1433px;top:508px;width:72.9px;background:#facccc"><span class="t " style="left:7.90px;letter-spacing:-0.100px;color:#e8656b">Muito Alto</span></div>
<div class="bd" style="left:1583px;top:508px;width:83.8px;background:#ef9a9a"><span class="t " style="left:8.40px;letter-spacing:-0.370px;color:#b71c1c">Quase Certo</span></div>
<div class="abs" style="left:1733px;top:508px;width:82px;height:22px;overflow:hidden"><div class="lv" style="left:0;border-color:#a31515;background:#ef9a9a"><div class="sq" style="left:11.700px;background:#ea5f68"><svg class="abs" style="left:.800px;top:.800px" width="13" height="13" viewBox="0 0 24 24"><path d="M16 18l2.290-2.290-4.880-4.880-4 4L2 7.410 3.410 6l6 6 4-4 6.300 6.290L22 12v6z" fill="#fff"/></svg></div><span class="t " style="left:31.20px;letter-spacing:0.200px;color:#8e1116">Muito alto</span></div></div>
<div class="rl" style="top:544px"></div>
<div class="cb" style="top:562px"></div>
<span class="t td" style="left:498.20px;letter-spacing:0.556px;top:559px">17/09/2024</span>
<span class="t td" style="left:637.70px;letter-spacing:0.087px;top:559px">Dados espalhados</span>
<span class="t td" style="left:857.80px;letter-spacing:0.127px;top:559px">Independente</span>
<span class="t td" style="left:1257.50px;letter-spacing:0.400px;top:559px">Identificado</span>
<div class="bd" style="left:1433px;top:560px;width:72.9px;background:#facccc"><span class="t " style="left:7.90px;letter-spacing:-0.100px;color:#e8656b">Muito Alto</span></div>
<div class="bd" style="left:1583px;top:560px;width:98.8px;background:#facccc"><span class="t " style="left:7.40px;letter-spacing:-0.177px;color:#e8656b">Muito Provável</span></div>
<div class="abs" style="left:1733px;top:560px;width:82px;height:22px;overflow:hidden"><div class="lv" style="left:0;border-color:#a31515;background:#ef9a9a"><div class="sq" style="left:11.700px;background:#ea5f68"><svg class="abs" style="left:.800px;top:.800px" width="13" height="13" viewBox="0 0 24 24"><path d="M16 18l2.290-2.290-4.880-4.880-4 4L2 7.410 3.410 6l6 6 4-4 6.300 6.290L22 12v6z" fill="#fff"/></svg></div><span class="t " style="left:31.20px;letter-spacing:0.200px;color:#8e1116">Muito alto</span></div></div>
<div class="rl" style="top:596px"></div>
<div class="cb" style="top:614px"></div>
<span class="t td" style="left:498.20px;letter-spacing:0.556px;top:611px">24/09/2024</span>
<span class="t td" style="left:637.70px;letter-spacing:0.087px;top:611px">Dados espalhados</span>
<span class="t td" style="left:857.80px;letter-spacing:0.127px;top:611px">Independente</span>
<span class="t td" style="left:1257.50px;letter-spacing:0.400px;top:611px">Identificado</span>
<div class="bd" style="left:1433px;top:612px;width:72.9px;background:#facccc"><span class="t " style="left:7.90px;letter-spacing:-0.100px;color:#e8656b">Muito Alto</span></div>
<div class="bd" style="left:1583px;top:612px;width:98.8px;background:#facccc"><span class="t " style="left:7.40px;letter-spacing:-0.177px;color:#e8656b">Muito Provável</span></div>
<div class="abs" style="left:1733px;top:612px;width:82px;height:22px;overflow:hidden"><div class="lv" style="left:0;border-color:#a31515;background:#ef9a9a"><div class="sq" style="left:11.700px;background:#ea5f68"><svg class="abs" style="left:.800px;top:.800px" width="13" height="13" viewBox="0 0 24 24"><path d="M16 18l2.290-2.290-4.880-4.880-4 4L2 7.410 3.410 6l6 6 4-4 6.300 6.290L22 12v6z" fill="#fff"/></svg></div><span class="t " style="left:31.20px;letter-spacing:0.200px;color:#8e1116">Muito alto</span></div></div>
<div class="rl" style="top:648px"></div>
<div class="cb" style="top:666px"></div>
<span class="t td" style="left:498.20px;letter-spacing:0.556px;top:663px">24/09/2024</span>
<span class="t td" style="left:637.70px;letter-spacing:0.087px;top:663px">Dados espalhados</span>
<span class="t td" style="left:857.80px;letter-spacing:0.127px;top:663px">Independente</span>
<span class="t td" style="left:1257.50px;letter-spacing:0.400px;top:663px">Identificado</span>
<div class="bd" style="left:1433px;top:664px;width:72.9px;background:#facccc"><span class="t " style="left:7.90px;letter-spacing:-0.100px;color:#e8656b">Muito Alto</span></div>
<div class="bd" style="left:1583px;top:664px;width:98.8px;background:#facccc"><span class="t " style="left:7.40px;letter-spacing:-0.177px;color:#e8656b">Muito Provável</span></div>
<div class="abs" style="left:1733px;top:664px;width:82px;height:22px;overflow:hidden"><div class="lv" style="left:0;border-color:#a31515;background:#ef9a9a"><div class="sq" style="left:11.700px;background:#ea5f68"><svg class="abs" style="left:.800px;top:.800px" width="13" height="13" viewBox="0 0 24 24"><path d="M16 18l2.290-2.290-4.880-4.880-4 4L2 7.410 3.410 6l6 6 4-4 6.300 6.290L22 12v6z" fill="#fff"/></svg></div><span class="t " style="left:31.20px;letter-spacing:0.200px;color:#8e1116">Muito alto</span></div></div>
<div class="rl" style="top:700px"></div>
<div class="cb" style="top:718px"></div>
<span class="t td" style="left:498.20px;letter-spacing:0.556px;top:715px">25/09/2024</span>
<span class="t td" style="left:638.70px;letter-spacing:0.000px;top:715px">test</span>
<span class="t td" style="left:857.80px;letter-spacing:0.127px;top:715px">Independente</span>
<span class="t td" style="left:1257.50px;letter-spacing:0.400px;top:715px">Identificado</span>
<div class="bd" style="left:1433px;top:716px;width:39.0px;background:#fcc9ab"><span class="t " style="left:8.60px;letter-spacing:-0.467px;color:#f5822a">Alto</span></div>
<div class="bd" style="left:1583px;top:716px;width:101.8px;background:#ffecb9"><span class="t " style="left:7.40px;letter-spacing:-0.238px;color:#f5a41f">Pouco Provável</span></div>
<div class="abs" style="left:1733px;top:716px;width:82px;height:22px;overflow:hidden"><div class="lv" style="left:0;border-color:#f6a623;background:#fff3e0"><div class="sq" style="left:22.700px;background:#fcc55f"><svg class="abs" style="left:.800px;top:.800px" width="13" height="13" viewBox="0 0 24 24"><path d="M16 18l2.290-2.290-4.880-4.880-4 4L2 7.410 3.410 6l6 6 4-4 6.300 6.290L22 12v6z" fill="#fff"/></svg></div><span class="t " style="left:42.00px;letter-spacing:-0.075px;color:#f6a21e">Médio</span></div></div>
<div class="rl" style="top:752px"></div>
<div class="cb" style="top:770px"></div>
<span class="t td" style="left:498.20px;letter-spacing:0.556px;top:767px">30/09/2024</span>
<span class="t td" style="left:637.70px;letter-spacing:0.087px;top:767px">Dados espalhados</span>
<span class="t td" style="left:857.80px;letter-spacing:0.127px;top:767px">Independente</span>
<span class="t td" style="left:1257.50px;letter-spacing:0.400px;top:767px">Identificado</span>
<div class="bd" style="left:1433px;top:768px;width:72.9px;background:#facccc"><span class="t " style="left:7.90px;letter-spacing:-0.100px;color:#e8656b">Muito Alto</span></div>
<div class="bd" style="left:1583px;top:768px;width:98.8px;background:#facccc"><span class="t " style="left:7.40px;letter-spacing:-0.177px;color:#e8656b">Muito Provável</span></div>
<div class="abs" style="left:1733px;top:768px;width:82px;height:22px;overflow:hidden"><div class="lv" style="left:0;border-color:#a31515;background:#ef9a9a"><div class="sq" style="left:11.700px;background:#ea5f68"><svg class="abs" style="left:.800px;top:.800px" width="13" height="13" viewBox="0 0 24 24"><path d="M16 18l2.290-2.290-4.880-4.880-4 4L2 7.410 3.410 6l6 6 4-4 6.300 6.290L22 12v6z" fill="#fff"/></svg></div><span class="t " style="left:31.20px;letter-spacing:0.200px;color:#8e1116">Muito alto</span></div></div>
<div class="rl" style="top:804px"></div>
<div class="cb" style="top:822px"></div>
<span class="t td" style="left:498.20px;letter-spacing:0.556px;top:819px">30/09/2024</span>
<span class="t td" style="left:638.70px;letter-spacing:0.100px;top:819px">Vazar dados</span>
<span class="t td" style="left:857.80px;letter-spacing:0.127px;top:819px">Independente</span>
<span class="t td" style="left:1257.50px;letter-spacing:0.400px;top:819px">Identificado</span>
<div class="bd" style="left:1433px;top:820px;width:72.9px;background:#facccc"><span class="t " style="left:7.90px;letter-spacing:-0.100px;color:#e8656b">Muito Alto</span></div>
<div class="bd" style="left:1583px;top:820px;width:98.8px;background:#facccc"><span class="t " style="left:7.40px;letter-spacing:-0.177px;color:#e8656b">Muito Provável</span></div>
<div class="abs" style="left:1733px;top:820px;width:82px;height:22px;overflow:hidden"><div class="lv" style="left:0;border-color:#a31515;background:#ef9a9a"><div class="sq" style="left:11.700px;background:#ea5f68"><svg class="abs" style="left:.800px;top:.800px" width="13" height="13" viewBox="0 0 24 24"><path d="M16 18l2.290-2.290-4.880-4.880-4 4L2 7.410 3.410 6l6 6 4-4 6.300 6.290L22 12v6z" fill="#fff"/></svg></div><span class="t " style="left:31.20px;letter-spacing:0.200px;color:#8e1116">Muito alto</span></div></div>
<div class="rl" style="top:856px"></div>
</div>
</body>
</html>
